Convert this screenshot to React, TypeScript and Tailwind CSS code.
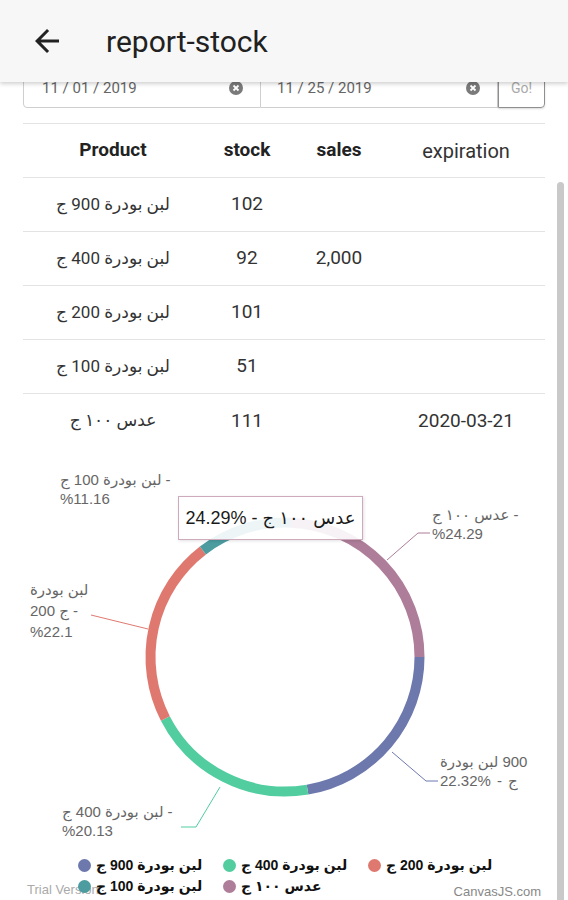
import React from "react";

const CX = 285;
const CY = 209;
const R = 134.5;

const segs = [
  { c: "#6D78AD", p: 22.32 },
  { c: "#51CDA0", p: 20.13 },
  { c: "#DF7970", p: 22.1 },
  { c: "#4C9CA0", p: 11.16 },
  { c: "#AE7D99", p: 24.29 },
];

function arc(a0: number, a1: number) {
  const rad = (d: number) => (d * Math.PI) / 180;
  const x0 = CX + R * Math.cos(rad(a0));
  const y0 = CY + R * Math.sin(rad(a0));
  const x1 = CX + R * Math.cos(rad(a1));
  const y1 = CY + R * Math.sin(rad(a1));
  const large = a1 - a0 > 180 ? 1 : 0;
  return `M ${x0} ${y0} A ${R} ${R} 0 ${large} 1 ${x1} ${y1}`;
}

function ClearIcon() {
  return (
    <svg width="14" height="14" viewBox="0 0 14 14">
      <circle cx="7" cy="7" r="7" fill="#7a7a7a" />
      <path d="M4.5 4.5 L9.5 9.5 M9.5 4.5 L4.5 9.5" stroke="#fff" strokeWidth="1.8" />
    </svg>
  );
}

const rows = [
  { p: "لبن بودرة 900 ج", s: "102", sa: "", e: "" },
  { p: "لبن بودرة 400 ج", s: "92", sa: "2,000", e: "" },
  { p: "لبن بودرة 200 ج", s: "101", sa: "", e: "" },
  { p: "لبن بودرة 100 ج", s: "51", sa: "", e: "" },
  { p: "عدس ١٠٠ ج", s: "111", sa: "", e: "2020-03-21" },
];

const legend = [
  { c: "bg-[#6D78AD]", t: "لبن بودرة 900 ج" },
  { c: "bg-[#51CDA0]", t: "لبن بودرة 400 ج" },
  { c: "bg-[#DF7970]", t: "لبن بودرة 200 ج" },
  { c: "bg-[#4C9CA0]", t: "لبن بودرة 100 ج" },
  { c: "bg-[#AE7D99]", t: "عدس ١٠٠ ج" },
];

function Chart() {
  let acc = 0;
  const paths = segs.map((s) => {
    const a0 = acc;
    const a1 = acc + (s.p / 100) * 360;
    acc = a1;
    return <path key={s.c} d={arc(a0, a1)} stroke={s.c} strokeWidth="10" fill="none" />;
  });
  const lbl = "absolute text-[15px] leading-[19px] text-[#666] font-['Liberation_Sans','DejaVu_Sans',sans-serif] whitespace-nowrap";
  return (
    <div className="relative w-[557px] h-[452px]">
      <svg className="absolute left-0 top-0" width="557" height="452">
        {paths}
        <polyline points="387,112 418,85 430,85" fill="none" stroke="#AE7D99" strokeWidth="1" />
        <polyline points="148,181 91,167" fill="none" stroke="#DF7970" strokeWidth="1" />
        <polyline points="392,304 426,333 438,333" fill="none" stroke="#6D78AD" strokeWidth="1" />
        <polyline points="220,339 196,379 181,379" fill="none" stroke="#51CDA0" strokeWidth="1" />
      </svg>

      <div className={`${lbl} left-[60px] top-[22px]`}>
        <div dir="ltr">لبن بودرة 100 ج -</div>
        <div dir="ltr">%11.16</div>
      </div>
      <div className={`${lbl} left-[432px] top-[57px]`}>
        <div dir="ltr">عدس ١٠٠ ج -</div>
        <div dir="ltr">%24.29</div>
      </div>
      <div className={`${lbl} left-[30px] top-[131px] leading-[21px]`}>
        <div dir="ltr">لبن بودرة</div>
        <div dir="ltr">200 ج -</div>
        <div dir="ltr">%22.1</div>
      </div>
      <div className={`${lbl} left-[440px] top-[304px]`}>
        <div className="flex gap-[4px]">
          <span>لبن بودرة</span>
          <span>900</span>
        </div>
        <div className="flex gap-[6px]">
          <span>22.32%</span>
          <span>-</span>
          <span>ج</span>
        </div>
      </div>
      <div className={`${lbl} left-[62px] top-[354px]`}>
        <div dir="ltr">لبن بودرة 400 ج -</div>
        <div dir="ltr">%20.13</div>
      </div>

      <div className="absolute left-[178px] top-[48px] w-[185px] h-[44px] bg-white/90 border border-[#cfaabd] shadow-[1px_1px_3px_rgba(0,0,0,0.12)] flex items-center justify-center">
        <span dir="ltr" className="text-[18px] text-[#1a1a1a] font-['Liberation_Sans','DejaVu_Sans',sans-serif] whitespace-nowrap">
          24.29% - عدس ١٠٠ ج
        </span>
      </div>

      <div className="absolute left-[27px] top-[432px] text-[13px] text-[#aaa] font-['Liberation_Sans',sans-serif]">
        Trial Version
      </div>
      <div className="absolute right-[16px] top-[434px] text-[13px] text-[#888] font-['Liberation_Sans',sans-serif]">
        CanvasJS.com
      </div>

      <div className="absolute left-[78px] top-[407px] grid grid-cols-[145px_145px_145px] auto-rows-[21px]">
        {legend.map((l) => (
          <div key={l.t} className="flex items-center gap-[5px]">
            <span className={`w-[13px] h-[13px] rounded-full ${l.c}`} />
            <span dir="ltr" className="text-[14px] font-bold text-[#111] font-['Liberation_Sans','DejaVu_Sans',sans-serif] whitespace-nowrap">
              {l.t}
            </span>
          </div>
        ))}
      </div>
    </div>
  );
}

export default function App() {
  return (
    <div className="w-[568px] h-[900px] overflow-hidden bg-white font-['Roboto','DejaVu_Sans',sans-serif]">
      <header className="relative z-10 h-[82px] bg-[#f7f7f7] shadow-[0_2px_4px_rgba(0,0,0,0.18)] flex items-center">
        <svg className="ml-[29px]" width="36" height="36" viewBox="0 0 24 24">
          <path d="M20 11H7.83l5.59-5.59L12 4l-8 8 8 8 1.41-1.41L7.83 13H20v-2z" fill="#222" />
        </svg>
        <h1 className="ml-[41px] text-[30px] text-[#212121]">report-stock</h1>
      </header>

      <div className="-mt-[14px] ml-[23px] w-[522px] h-[40px] flex">
        <div className="w-[238px] border border-[#cfcfcf] rounded-bl-[4px] flex items-center justify-between pl-[18px] pr-[17px]">
          <span className="text-[15px] text-[#666]">11 / 01 / 2019</span>
          <ClearIcon />
        </div>
        <div className="w-[237px] border-y border-r border-[#cfcfcf] flex items-center justify-between pl-[16px] pr-[17px]">
          <span className="text-[15px] text-[#666]">11 / 25 / 2019</span>
          <ClearIcon />
        </div>
        <div className="w-[47px] border border-[#8f8f8f] rounded-br-[4px] shadow-[0_1px_2px_rgba(0,0,0,0.15)] flex items-center justify-center">
          <span className="text-[14px] text-[#aaa]">Go!</span>
        </div>
      </div>

      <div className="ml-[23px] w-[522px] mt-[15px] border-t border-[#e3e3e3]">
        <div className="grid grid-cols-[180px_88px_96px_158px] h-[54px] items-center text-center border-b border-[#e3e3e3] text-[19px] text-[#222]">
          <div className="font-bold">Product</div>
          <div className="font-bold">stock</div>
          <div className="font-bold">sales</div>
          <div className="font-normal text-[20px] text-[#333]">expiration</div>
        </div>
      </div>

      <div className="flex">
        <div className="w-[557px]">
          <div className="ml-[23px] w-[522px]">
            {rows.map((r, i) => (
              <div
                key={i}
                className={`grid grid-cols-[180px_88px_96px_158px] h-[54px] items-center text-center text-[19px] text-[#333] ${
                  i < rows.length - 1 ? "border-b border-[#e3e3e3]" : ""
                }`}
              >
                <div dir="ltr" className="text-[17px]">{r.p}</div>
                <div>{r.s}</div>
                <div>{r.sa}</div>
                <div>{r.e}</div>
              </div>
            ))}
          </div>
          <Chart />
        </div>
        <div className="mt-[4px] w-[7px] h-[800px] rounded-[4px] bg-[#c9c9c9]" />
      </div>
    </div>
  );
}
